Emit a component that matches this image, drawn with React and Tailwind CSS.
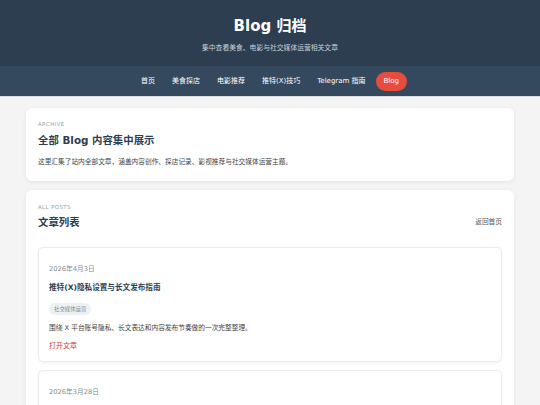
const navItems = ["首页", "美食探店", "电影推荐", "推特(X)技巧", "Telegram 指南"];

const posts = [
  {
    date: "2026年4月3日",
    title: "推特(X)隐私设置与长文发布指南",
    tag: "社交媒体运营",
    desc: "围绕 X 平台账号隐私、长文表达和内容发布节奏做的一次完整整理。",
  },
  {
    date: "2026年3月28日",
    title: "Telegram 频道运营入门",
    tag: "社交媒体运营",
    desc: "从频道建立到内容规划的基础记录。",
  },
];

function PostCard({ post }) {
  return (
    <div className="mt-[8px] first:mt-0 rounded-[5px] border border-[#ececec] bg-white px-[10px] pt-[16px] pb-[10px] shadow-[0_1px_3px_rgba(0,0,0,0.06)]">
      <div className="text-[6.7px] leading-[10px] text-[#7f8c8d]">{post.date}</div>
      <div className="mt-[8px] text-[7.6px] leading-[12px] font-bold text-[#2c3e50]">{post.title}</div>
      <div className="mt-[9px] flex">
        <span className="rounded-full bg-[#eef1f3] px-[5px] text-[5.4px] leading-[12px] text-[#7f8c8d]">
          {post.tag}
        </span>
      </div>
      <div className="mt-[8px] text-[6.7px] leading-[10px] text-[#444]">{post.desc}</div>
      <div className="mt-[8px] text-[7px] leading-[10px] text-[#d0392b]">打开文章</div>
    </div>
  );
}

export default function App() {
  return (
    <div
      className="min-h-screen bg-[#f4f4f4]"
      style={{ fontFamily: '"DejaVu Sans", "Noto Sans CJK SC", sans-serif' }}
    >
      <header className="bg-[#2c3e50] pt-[17px] pb-[13px] text-center">
        <h1 className="text-[15px] leading-[18px] font-bold text-white">Blog 归档</h1>
        <p className="mt-[8px] text-[6.8px] leading-[10px] text-[#c9d2da]">
          集中查看美食、电影与社交媒体运营相关文章
        </p>
      </header>

      <nav className="flex h-[31px] items-center justify-center gap-[1px] bg-[#34495e] border-b border-[#dcdcdc]">
        {navItems.map((item) => (
          <a key={item} className="px-[8px] text-[7px] leading-[19px] text-white">
            {item}
          </a>
        ))}
        <a className="ml-[1px] rounded-full bg-[#e74c3c] px-[8px] text-[7px] leading-[19px] text-white">
          Blog
        </a>
      </nav>

      <main className="mx-[26px] pt-[11px] pb-[20px]">
        <section className="rounded-[6px] bg-white px-[12px] pt-[12px] pb-[14px] shadow-[0_1px_4px_rgba(0,0,0,0.07)]">
          <div className="text-[5.4px] leading-[8px] tracking-[0.08em] text-[#95a0a6]">ARCHIVE</div>
          <h2 className="mt-[5px] text-[10.4px] leading-[14px] font-bold text-[#2c3e50]">
            全部 Blog 内容集中展示
          </h2>
          <p className="mt-[10px] text-[6.7px] leading-[10px] text-[#444]">
            这里汇集了站内全部文章，涵盖内容创作、探店记录、影视推荐与社交媒体运营主题。
          </p>
        </section>

        <section className="mt-[9px] rounded-[6px] bg-white px-[12px] pt-[13px] pb-[14px] shadow-[0_1px_4px_rgba(0,0,0,0.07)]">
          <div className="text-[5.4px] leading-[8px] tracking-[0.08em] text-[#95a0a6]">ALL POSTS</div>
          <div className="mt-[4px] flex items-center justify-between">
            <h2 className="text-[10.4px] leading-[14px] font-bold text-[#2c3e50]">文章列表</h2>
            <a className="text-[6.7px] leading-[10px] text-[#555]">返回首页</a>
          </div>
          <div className="mt-[18px] flex flex-col">
            {posts.map((post) => (
              <PostCard key={post.date} post={post} />
            ))}
          </div>
        </section>
      </main>
    </div>
  );
}
